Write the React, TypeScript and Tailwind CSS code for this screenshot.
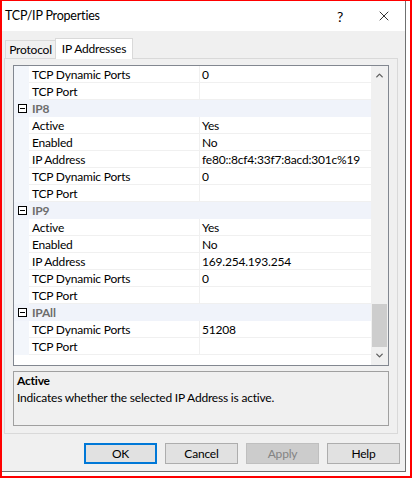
import { ChevronDown, ChevronUp, X } from "lucide-react"

type Row = { name: string; value: string }
type Section = { title?: string; rows: Row[] }

const sections: Section[] = [
    {
        rows: [
            { name: "TCP Dynamic Ports", value: "0" },
            { name: "TCP Port", value: "" },
        ],
    },
    {
        title: "IP8",
        rows: [
            { name: "Active", value: "Yes" },
            { name: "Enabled", value: "No" },
            { name: "IP Address", value: "fe80::8cf4:33f7:8acd:301c%19" },
            { name: "TCP Dynamic Ports", value: "0" },
            { name: "TCP Port", value: "" },
        ],
    },
    {
        title: "IP9",
        rows: [
            { name: "Active", value: "Yes" },
            { name: "Enabled", value: "No" },
            { name: "IP Address", value: "169.254.193.254" },
            { name: "TCP Dynamic Ports", value: "0" },
            { name: "TCP Port", value: "" },
        ],
    },
    {
        title: "IPAll",
        rows: [
            { name: "TCP Dynamic Ports", value: "51208" },
            { name: "TCP Port", value: "" },
        ],
    },
]

function CategoryRow({ title }: { title: string }) {
    return (
        <div className="flex h-[17px] bg-[#f0f3fa] items-center">
            <div className="w-[15px] flex justify-center items-center pl-[2px]">
                <div className="w-[9px] h-[9px] border border-black flex items-center justify-center bg-white">
                    <div className="w-[5px] h-px bg-black" />
                </div>
            </div>
            <span className="pl-[3px] font-bold text-[#6d6d6d]">{title}</span>
        </div>
    )
}

function PropRow({ row }: { row: Row }) {
    return (
        <div className="flex h-[17px] bg-[#f3f6fb]">
            <div className="w-[15px]" />
            <div className="flex flex-1 bg-white border-b border-[#f0f0f0]">
                <div className="w-[171px] pl-[3px] leading-[17px] border-r border-[#f0f0f0] truncate">{row.name}</div>
                <div className="flex-1 pl-[2px] leading-[17px] whitespace-nowrap overflow-hidden">{row.value}</div>
            </div>
        </div>
    )
}

function DialogButton({ label, primary, disabled }: { label: string; primary?: boolean; disabled?: boolean }) {
    return (
        <button
            className={
                disabled
                    ? "w-[73px] h-[21px] bg-[#cccccc] border border-[#bfbfbf] text-[#838383]"
                    : primary
                    ? "w-[73px] h-[21px] bg-[#e1e1e1] border-2 border-[#0078d7] text-black"
                    : "w-[73px] h-[21px] bg-[#e1e1e1] border border-[#adadad] text-black"
            }
        >
            {label}
        </button>
    )
}

export default function App() {
    return (
        <div
            className="w-[413px] h-[478px] bg-white text-[12px] tracking-[-0.2px] text-black"
            style={{ fontFamily: '"Segoe UI", Lato, sans-serif' }}
        >
            <div className="w-[412px] h-[478px] border-l-2 border-t border-r-2 border-b-2 border-[#ff0000] pr-[4px] pb-[4px]">
                <div className="h-full flex flex-col bg-[#f0f0f0] border-r border-b border-[#707070]">
                    {/* title bar */}
                    <div className="h-[30px] bg-white flex items-center pl-[3px]">
                        <span className="flex-1 text-[12.5px]">TCP/IP Properties</span>
                        <span className="w-[20px] text-center mr-[26px] text-[14px]">?</span>
                        <X className="w-[16px] h-[16px] mr-[13px]" strokeWidth={1.2} />
                    </div>

                    {/* tabs */}
                    <div className="flex items-end h-[27px] pl-[3px]">
                        <div className="h-[18px] w-[51px] text-center border border-b-0 border-[#d9d9d9] leading-[17px]">Protocol</div>
                        <div className="h-[21px] w-[78px] text-center -ml-px border border-b-0 border-[#d9d9d9] bg-white leading-[19px] relative top-px">
                            IP Addresses
                        </div>
                    </div>

                    {/* tab panel */}
                    <div className="ml-[2px] mr-[7px] h-[376px] border border-[#d9d9d9] bg-[#f0f0f0] px-[8px] pt-[6px]">
                        <div className="h-[301px] border border-[#828790] bg-white flex">
                            <div className="flex-1 flex flex-col">
                                {sections.map((s, i) => (
                                    <div key={i}>
                                        {s.title && <CategoryRow title={s.title} />}
                                        {s.rows.map((r, j) => (
                                            <PropRow key={j} row={r} />
                                        ))}
                                    </div>
                                ))}
                            </div>
                            <div className="w-[17px] bg-[#f0f0f0] flex flex-col items-center">
                                <ChevronUp className="w-[11px] h-[11px] mt-[4px] text-[#606060]" strokeWidth={3} />
                                <div className="flex-1" />
                                <div className="w-[15px] h-[43px] bg-[#cdcdcd] mb-[3px]" />
                                <ChevronDown className="w-[11px] h-[11px] mb-[4px] text-[#606060]" strokeWidth={3} />
                            </div>
                        </div>

                        <div className="mt-[5px] h-[55px] border border-[#a0a0a0] px-[3px] pt-[1px]">
                            <div className="font-bold leading-[16px]">Active</div>
                            <div className="leading-[18px]">Indicates whether the selected IP Address is active.</div>
                        </div>
                    </div>

                    {/* buttons */}
                    <div className="flex gap-[8px] pl-[82px] mt-[9px]">
                        <DialogButton label="OK" primary />
                        <DialogButton label="Cancel" />
                        <DialogButton label="Apply" disabled />
                        <DialogButton label="Help" />
                    </div>
                </div>
            </div>
        </div>
    )
}
